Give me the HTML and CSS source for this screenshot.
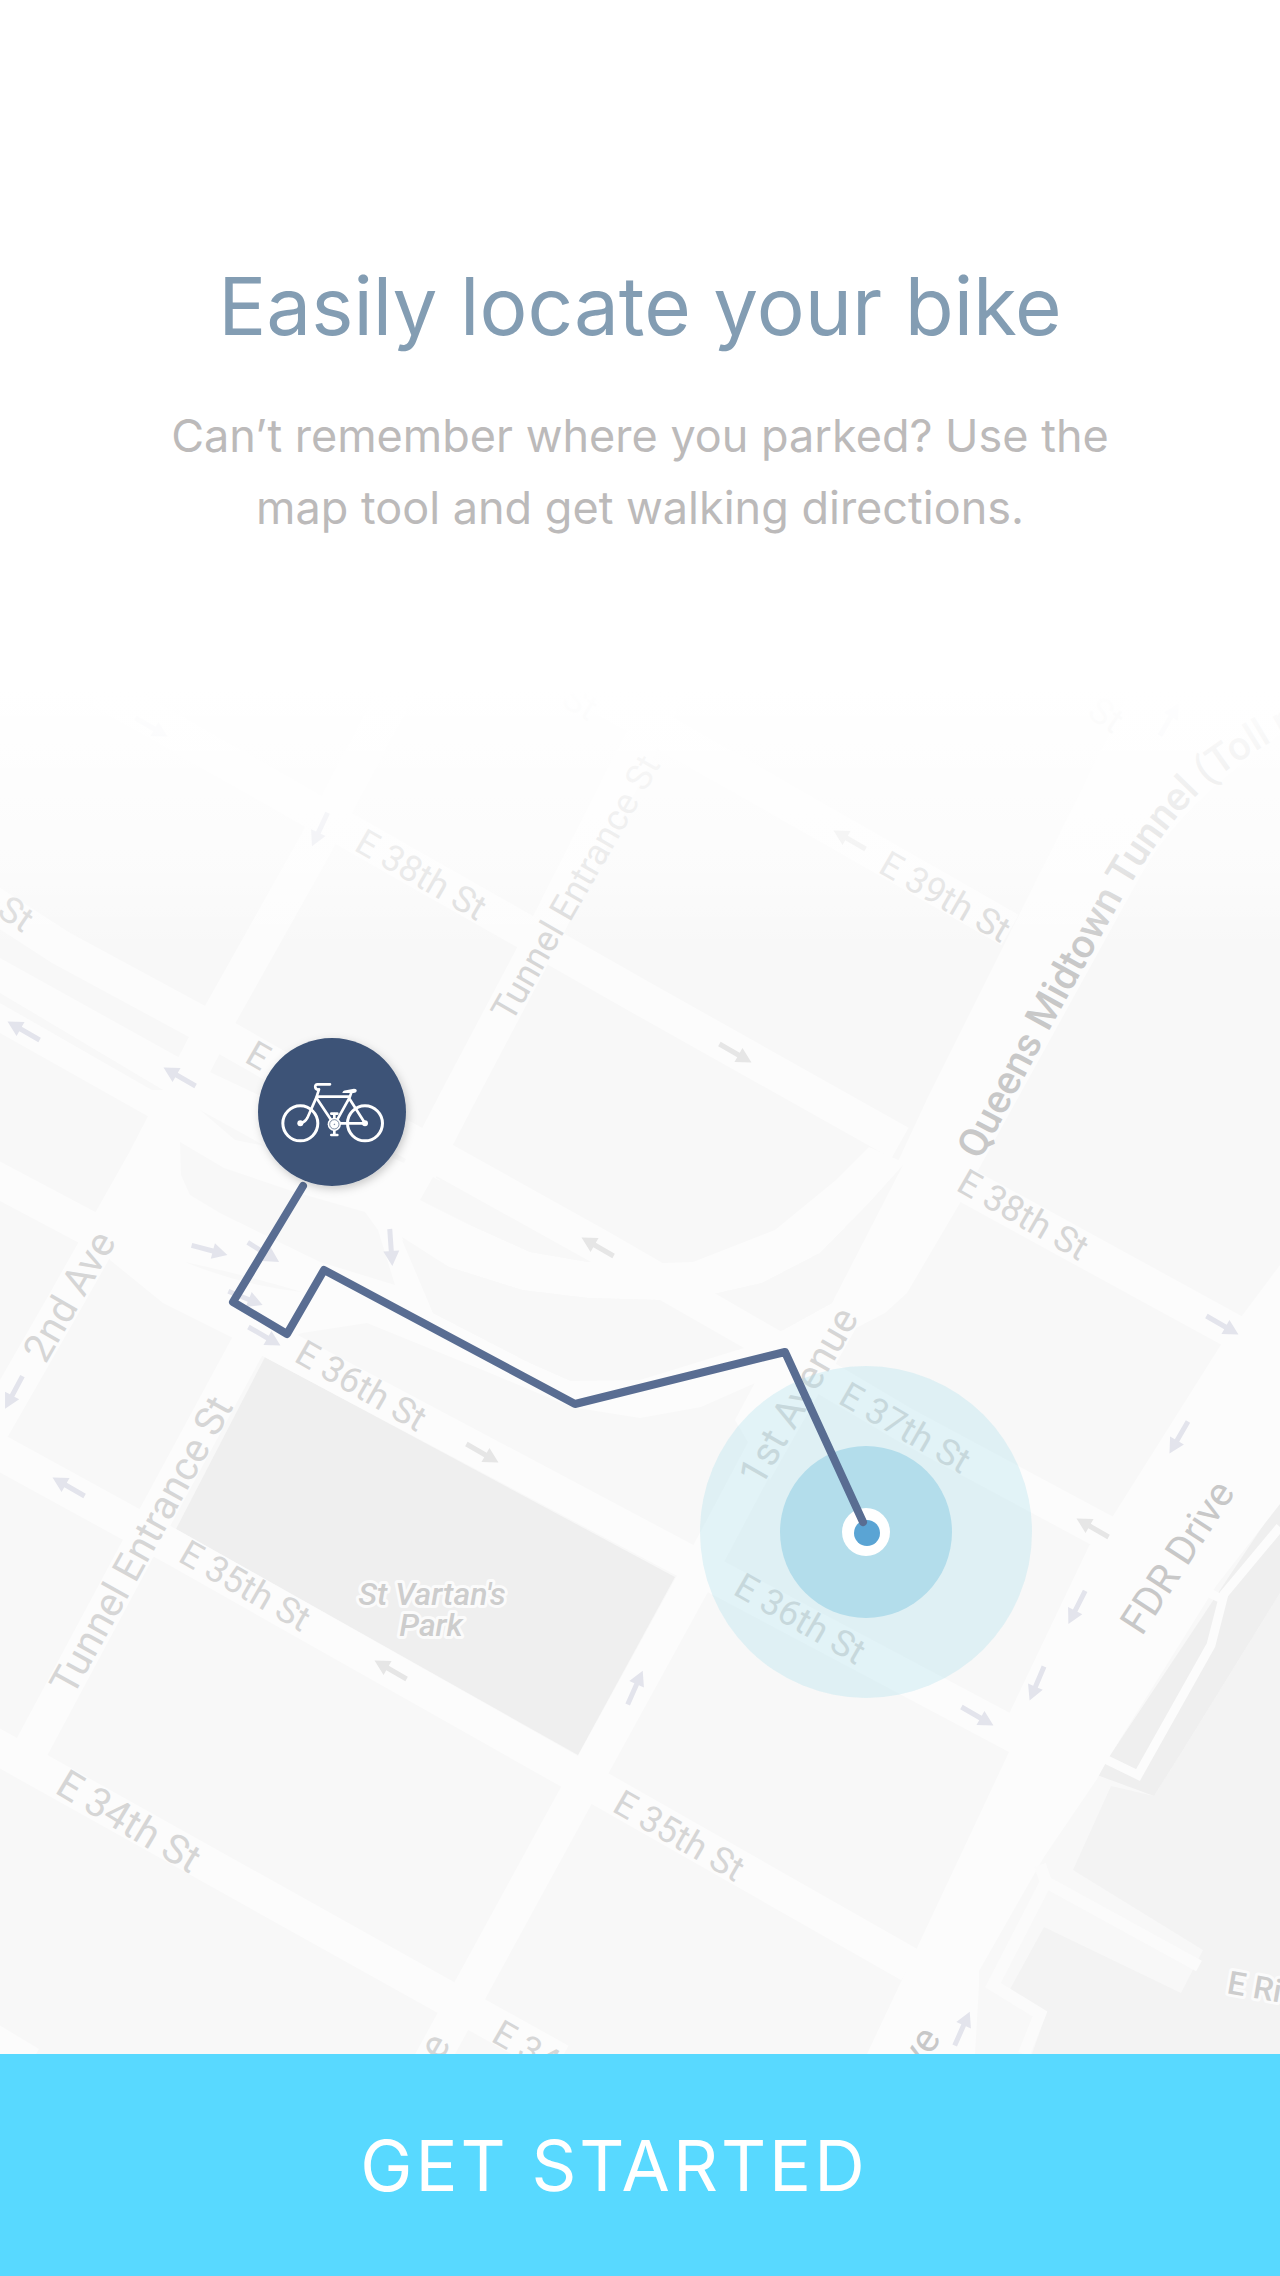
FILE: index.html
```html
<!DOCTYPE html>
<html lang="en">
<head>
<meta charset="utf-8">
<meta name="viewport" content="width=device-width, initial-scale=1">
<title>Easily locate your bike</title>
<link rel="stylesheet" href="styles.css">
</head>
<body>
<main class="screen">
  <header class="intro">
    <h1 class="intro-title">Easily locate your bike</h1>
    <p class="intro-text">Can’t remember where you parked? Use the map tool and get walking directions.</p>
  </header>

  <svg class="map" viewBox="0 640 1280 1414" preserveAspectRatio="xMidYMax slice" role="img" aria-label="Map with the walking route to your bike">
    <defs>
      <linearGradient id="fade" x1="0" y1="0" x2="0" y2="1">
        <stop offset="0" stop-color="#fff"/>
        <stop offset="0.16" stop-color="#fff"/>
        <stop offset="0.75" stop-color="#fff" stop-opacity="0.5"/>
        <stop offset="1" stop-color="#fff" stop-opacity="0"/>
      </linearGradient>
      <filter id="shadow" x="-20%" y="-20%" width="150%" height="150%">
        <feDropShadow dx="2" dy="3" stdDeviation="4" flood-color="#000" flood-opacity="0.2"/>
      </filter>
      <path id="arrow" d="M-18-2.500H4V-8L19 0 4 8V2.500H-18Z"/>
      <path id="tunnel-line" d="M980 1161L1050 1029L1118 906Q1159 832 1203 789Q1240 756 1340 704"/>
    </defs>

    <rect class="land" y="640" width="1280" height="1414"/>

    <!-- river, pier and waterfront -->
    <path class="water" d="M1280 1593L1183 1750 1154 1796 1111 1786 1073 1870 1203 1950 1181 1993 1044 1927 1009 1991 1046 2014 1032 2054H1280Z"/>
    <path class="park" d="M1280 1500V1593L1183 1750 1154 1796 1097 1775Z"/>

    <path class="park" d="M265 1357L675 1577 578 1755 176 1529Z"/>

    <!-- streets -->
    <g class="road">
      <path d="M100 690L640 997 900 1143"/>
      <path d="M940 1171L1260 1346"/>
      <path d="M420 650L375 732 317 842 221 1013 145 1160 66 1300-20 1450"/>
      <path d="M690 645L533 955 458 1097 402 1205"/>
      <path d="M-10 902L61 948 200 1023 300 1080 600 1247 790 1357 905 1425 1110 1535"/>
      <path d="M-10 1176L160 1266 264 1337 1020 1738"/>
      <path d="M560 673L1010 930"/>
      <path d="M-10 1447L176 1549 569 1771 910 1965"/>
      <path d="M-10 1743L445 1997 560 2061"/>
      <path d="M25 1760L140 1545 248 1345"/>
      <path d="M410 2100L593 1765 700 1570 830 1325"/>
      <path d="M-10 2040L30 2064"/>
    </g>
    <g class="junction">
      <path d="M0 958L180 1058 440 1180 402 1237 433 1313 530 1363 571 1381 640 1380 744 1348 783 1330 800 1370 762 1380 701 1407 640 1418 571 1407 490 1373 367 1323 302 1333 260 1350 231 1337 163 1303 110 1260 151 1118 0 1033Z"/>
      <path d="M402 1200L420 1200 470 1225 530 1252 588 1262 665 1263 693 1262 775 1230 836 1180 869 1147 905 1163 869 1203 820 1253 762 1283 718 1293 660 1300 588 1298 522 1290 449 1267 402 1237Z"/>
      <path d="M1155 640L1093 767 928 1097 832 1303 783 1330 735 1420 770 1480 856 1328 885 1313 907 1293 960 1203 1142 873Q1180 805 1280 735V640Z"/>
      <path d="M1280 1265L1244 1313 1222 1343 1113 1516 1089 1546 1009 1714 1009 1752 916 1950 867 2054H975L979 1985 979 1971 1044 1857 1097 1779 1109 1757 1216 1586 1280 1504Z"/>
    </g>
    <g class="land">
      <path d="M0 993L163 1090H152L0 1003Z"/>
      <path d="M200 1110L265 1146 235 1140Z"/>
      <path d="M180 1142L224 1168 295 1192 365 1212 378 1230 395 1285 320 1262 220 1213 190 1195 181 1175Z"/>
      <path d="M433 1177L588 1262 530 1252 470 1225 420 1200Z"/>
      <path d="M402 1240L449 1267 522 1290 588 1298 660 1300 744 1348 640 1375 571 1381 530 1363 433 1313Z"/>
      <path d="M903 1165L832 1303 783 1330 718 1293 762 1283 820 1253 869 1203Z"/>
      <path d="M185 1262Q245 1275 302 1292 240 1285 185 1262Z"/>
    </g>
    <path class="path" d="M1280 1527L1224 1594 1211 1645 1138 1775 1103 1758M1203 1590L1224 1600"/>
    <path class="pier-line" d="M1040 1865L1046 1882 1199 1966M1046 1882L993 1985 1040 2014 1024 2054"/>

    <!-- one-way arrows -->
    <g class="arrows">
      <use href="#arrow" transform="translate(151 727) rotate(30)"/>
      <use href="#arrow" transform="translate(320 829) rotate(115)"/>
      <use href="#arrow" transform="translate(24 1031) rotate(210)"/>
      <use href="#arrow" transform="translate(180 1077) rotate(210)"/>
      <use href="#arrow" transform="translate(1169 720) rotate(-60)"/>
      <use href="#arrow" transform="translate(209 1250) rotate(15)"/>
      <use href="#arrow" transform="translate(263 1252) rotate(32)"/>
      <use href="#arrow" transform="translate(391 1247) rotate(86)"/>
      <use href="#arrow" transform="translate(245 1298) rotate(22)"/>
      <use href="#arrow" transform="translate(264 1336) rotate(30)"/>
      <use href="#arrow" transform="translate(14 1392) rotate(118)"/>
      <use href="#arrow" transform="translate(69 1487) rotate(210)"/>
      <use href="#arrow" transform="translate(1222 1325) rotate(30)"/>
      <use href="#arrow" transform="translate(1179 1437) rotate(120)"/>
      <use href="#arrow" transform="translate(1077 1607) rotate(117)"/>
      <use href="#arrow" transform="translate(1037 1683) rotate(113)"/>
      <use href="#arrow" transform="translate(977 1716) rotate(30)"/>
      <use href="#arrow" transform="translate(962 2029) rotate(-66)"/>
      <use href="#arrow" transform="translate(635 1688) rotate(-66)"/>
    </g>
    <g class="arrows arrows-gray">
      <use href="#arrow" transform="translate(850 840) rotate(210)"/>
      <use href="#arrow" transform="translate(735 1053) rotate(30)"/>
      <use href="#arrow" transform="translate(598 1247) rotate(210)"/>
      <use href="#arrow" transform="translate(482 1453) rotate(30)"/>
      <use href="#arrow" transform="translate(1093 1528) rotate(210)"/>
      <use href="#arrow" transform="translate(391 1670) rotate(210)"/>
    </g>

    <!-- street names -->
    <g class="label">
      <text transform="translate(421 875) rotate(30)" dy="12">E 38th St</text>
      <text transform="translate(945 897) rotate(30)" dy="12">E 39th St</text>
      <text transform="translate(1023 1215) rotate(30)" dy="12">E 38th St</text>
      <text transform="translate(361 1386) rotate(30)" dy="12">E 36th St</text>
      <text transform="translate(905 1428) rotate(30)" dy="12">E 37th St</text>
      <text transform="translate(245 1586) rotate(30)" dy="12">E 35th St</text>
      <text transform="translate(800 1619) rotate(30)" dy="12">E 36th St</text>
      <text transform="translate(679 1836) rotate(30)" dy="12">E 35th St</text>
      <text transform="translate(558 2066) rotate(30)" dy="12">E 34th St</text>
      <text transform="translate(258 1056) rotate(30)" dy="12">E</text>
      <text transform="translate(16 914) rotate(34)" dy="12">St</text>
      <text transform="translate(580 703) rotate(30)" dy="12">St</text>
      <text transform="translate(1106 715) rotate(34)" dy="12">St</text>
      <text transform="translate(576 888) rotate(-60)" dy="12">Tunnel Entrance St</text>
    </g>
    <g class="label label-large">
      <text transform="translate(141 1545) rotate(-61)" dy="14">Tunnel Entrance St</text>
      <text transform="translate(798 1396) rotate(-60)" dy="14">1st Avenue</text>
      <text transform="translate(69 1296) rotate(-60)" dy="14">2nd Ave</text>
      <text transform="translate(129 1821) rotate(31)" dy="14">E 34th St</text>
      <text transform="translate(390 2122) rotate(-60)" dy="14">1st Avenue</text>
    </g>
    <g class="label label-major">
      <text transform="translate(1177 1557) rotate(-57)" dy="14">FDR Drive</text>
      <text transform="translate(883 2103) rotate(-57)" dy="14">FDR Drive</text>
      <text class="label-start label-tunnel"><textPath href="#tunnel-line">Queens Midtown Tunnel (Toll road)</textPath></text>
    </g>
    <g class="label label-place">
      <text class="slanted" x="432" y="1605">St Vartan's</text>
      <text class="slanted" x="431" y="1636">Park</text>
      <text class="label-start" transform="translate(1226 1993) rotate(10)">E River</text>
    </g>

    <rect y="640" width="1280" height="310" fill="url(#fade)"/>

    <!-- current position and route -->
    <circle class="range-far" cx="866" cy="1532" r="166"/>
    <circle class="range-near" cx="866" cy="1532" r="86"/>
    <circle fill="#fff" cx="866" cy="1532" r="24"/>
    <circle fill="#5aa4d4" cx="867" cy="1533" r="13"/>
    <path class="route" d="M303 1186L233 1302 287 1334 324 1270 575 1404 785 1352 863 1522"/>

    <!-- bike marker -->
    <circle class="marker" cx="332" cy="1112" r="74" filter="url(#shadow)"/>
    <g class="bike" transform="translate(240 1020) scale(0.3333)">
      <circle cx="181" cy="310" r="52.500"/>
      <circle cx="375" cy="310" r="52.500"/>
      <g class="tube">
        <path d="M270 193H233Q224 193 226 203 228 210 237 208L229 233 202 294Q195 307 181 310"/>
        <path d="M232 230H326M229 233L273 299M335 215L329 232 292 299M327 234L375 310H300M283 296V282M283 330V344"/>
        <path d="M274 281H292M274 345H292"/>
      </g>
      <g class="solid">
        <path d="M307 219Q308 212 318 211L342 206Q352 207 350 214 348 220 338 219L322 219Z"/>
        <circle cx="181" cy="310" r="9"/>
        <circle cx="375" cy="310" r="9"/>
        <circle cx="283" cy="313" r="20"/>
      </g>
      <circle class="ring" cx="283" cy="313" r="14"/>
      <circle class="ring" cx="283" cy="313" r="1"/>
    </g>
  </svg>

  <button class="start" type="button">GET STARTED</button>
</main>
</body>
</html>
```

FILE: styles.css
```css
* {
  box-sizing: border-box;
}

body {
  margin: 0;
  background: #fff;
  font-family: Inter, "Liberation Sans", sans-serif;
}

.screen {
  display: flex;
  flex-direction: column;
  min-height: 100vh;
}

.intro {
  padding: 256px 140px 96px;
  text-align: center;
}

.intro-title {
  margin: 0 0 44px;
  color: #839db3;
  font-size: 80px;
  font-weight: 400;
  line-height: 100px;
}

.intro-text {
  max-width: 1000px;
  margin: 0 auto;
  color: #bcbaba;
  font-size: 45px;
  line-height: 72px;
}

.map {
  display: block;
  flex: 1 0 0;
  width: 100%;
  min-height: 0;
}

.land { fill: #f8f8f8; }
.water { fill: #f3f3f3; }
.park { fill: #efefef; }
.junction { fill: #fcfcfc; }

.road {
  fill: none;
  stroke: #fcfcfc;
  stroke-width: 35;
}

.path {
  fill: none;
  stroke: #fcfcfc;
  stroke-width: 9;
}

.pier-line {
  fill: none;
  stroke: #fbfbfb;
  stroke-width: 12;
}

.arrows { fill: #e3e4ec; }
.arrows-gray { fill: #e6e6e6; }

.label {
  fill: #d6d6d6;
  font-family: Roboto, "Liberation Sans", sans-serif;
  font-size: 36px;
  text-anchor: middle;
}

.label-large {
  font-size: 40px;
}

.label-major {
  fill: #c8c8c8;
  font-size: 40px;
}

.label-tunnel {
  font-weight: 500;
}

.label-place {
  fill: #cdcdcd;
  font-size: 32px;
  font-weight: 500;
  stroke: #fbfbfb;
  stroke-width: 6;
  stroke-linejoin: round;
  paint-order: stroke;
}

.label-start { text-anchor: start; }
.slanted { font-style: italic; }

.range-far { fill: rgba(165, 221, 236, 0.3); }
.range-near { fill: #b3ddeb; }

.route {
  fill: none;
  stroke: #596d92;
  stroke-width: 8;
  stroke-linecap: round;
  stroke-linejoin: round;
}

.marker { fill: #3d5377; }

.bike {
  fill: none;
  stroke: #fff;
  stroke-width: 9;
}

.tube {
  stroke-width: 8;
  stroke-linecap: round;
  stroke-linejoin: round;
}

.solid {
  fill: #fff;
  stroke: none;
}

.ring {
  stroke: #3d5377;
  stroke-width: 2;
}

.start {
  width: 100%;
  min-height: 222px;
  padding: 0 52px 0 0;
  border: 0;
  background: #58d9ff;
  color: #fff;
  font-family: inherit;
  font-size: 70px;
  letter-spacing: 3px;
  cursor: pointer;
}
```
